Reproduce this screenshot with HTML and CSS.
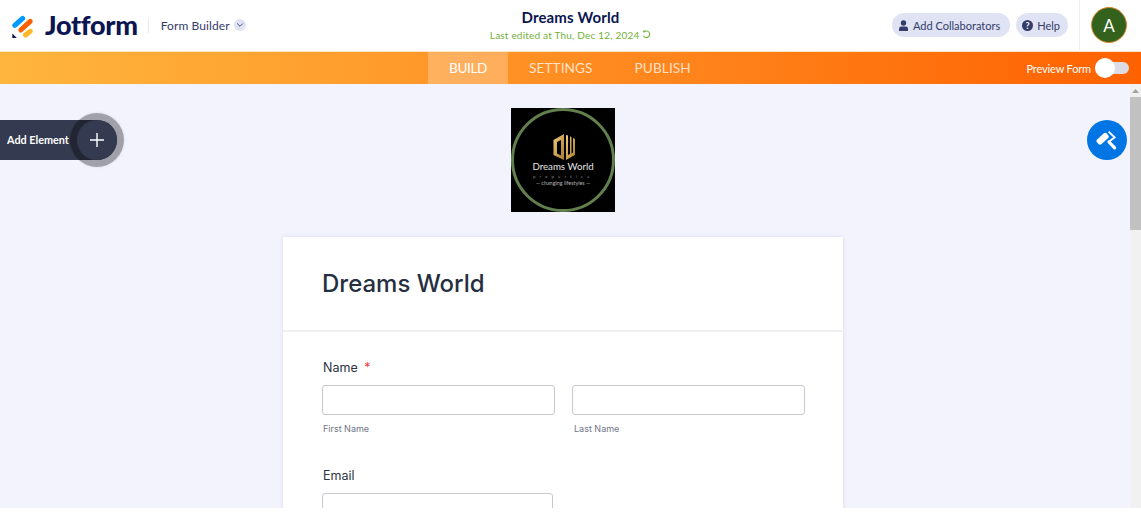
FILE: index.html
```html
<!DOCTYPE html>
<html lang="en">
<head>
<meta charset="UTF-8">
<meta name="viewport" content="width=device-width, initial-scale=1.0">
<title>Dreams World - Form Builder</title>
<link rel="stylesheet" href="styles.css">
</head>
<body>
<div class="app">
    <header class="topbar">
        <div class="brand">
            <svg class="brand-icon" width="24" height="26" viewBox="0 -2.5 24 26">
                <path d="M2.8 10.8 L10.6 3.8" stroke="#0099ff" stroke-width="5" stroke-linecap="round"/>
                <path d="M8.8 15.5 L18.2 6.8" stroke="#ff6100" stroke-width="5" stroke-linecap="round"/>
                <path d="M13.5 20.5 L18.2 16.8" stroke="#ffb629" stroke-width="5" stroke-linecap="round"/>
                <path d="M0.3 19 L5.3 24 H1.5 Q0.3 24 0.3 22.8 Z" fill="#0a1551"/>
            </svg>
            <span class="wordmark">Jotform</span>
            <span class="brand-sep"></span>
            <span class="builder-label">Form Builder</span>
            <span class="builder-caret">
                <svg width="8" height="6" viewBox="0 0 8 6"><path d="M1.2 1.5 L4 4.3 L6.8 1.5" fill="none" stroke="#343c6a" stroke-width="0.9"/></svg>
            </span>
        </div>
        <div class="form-title">
            <div class="form-name">Dreams World</div>
            <div class="form-edited">Last edited at Thu, Dec 12, 2024
                <svg width="9" height="9" viewBox="0 0 10 10"><path d="M2.4 2 A3.7 3.7 0 1 1 1.6 6.4" fill="none" stroke="#72b13a" stroke-width="1.2"/><path d="M0.8 0.6 L4 0.8 L2 3.4 Z" fill="#72b13a"/></svg>
            </div>
        </div>
        <div class="top-actions">
            <button class="pill">
                <svg width="11" height="11" viewBox="0 0 11 11"><circle cx="5.5" cy="3" r="2.7" fill="#343c6a"/><path d="M1 11 V8.8 Q1 6.6 3.4 6.6 H7.6 Q10 6.6 10 8.8 V11 Z" fill="#343c6a"/></svg>
                Add Collaborators
            </button>
            <button class="pill pill-help">
                <span class="help-icon">?</span>
                Help
            </button>
            <div class="avatar-wrap"><div class="avatar">A</div></div>
        </div>
    </header>

    <nav class="tabs">
        <div class="tab-list">
            <a class="tab active">BUILD</a>
            <a class="tab">SETTINGS</a>
            <a class="tab">PUBLISH</a>
        </div>
        <div class="preview">
            <span>Preview Form</span>
            <span class="toggle"><span class="knob"></span></span>
        </div>
    </nav>

    <div class="workspace">
        <main class="canvas">
            <svg class="form-logo" width="104" height="104" viewBox="0 0 104 104">
                <defs>
                    <linearGradient id="gold" x1="0" y1="0" x2="1" y2="1">
                        <stop offset="0" stop-color="#f1cd7a"/>
                        <stop offset="1" stop-color="#a97a2c"/>
                    </linearGradient>
                </defs>
                <rect width="104" height="104" fill="#000"/>
                <circle cx="52" cy="52" r="50.5" fill="none" stroke="#627f4e" stroke-width="3"/>
                <path fill-rule="evenodd" d="M42.5 32 L53 26 V52 L42.5 47 Z M46 34 V45.5 L50 47.5 V32 Z" fill="url(#gold)"/>
                <path d="M55 27 L57 27.5 V47 L59 46 V28.5 L60.5 29 V45.5 L62 44.5 V30 L64 31 V47 L55 52 Z" fill="url(#gold)"/>
                <text x="52" y="62" class="logo-name">Dreams World</text>
                <text x="52" y="69.5" class="logo-sub">properties</text>
                <text x="52" y="77" class="logo-tag">— changing lifestyles —</text>
            </svg>

            <form class="card">
                <h1 class="card-title">Dreams World</h1>
                <div class="card-body">
                    <div class="field">
                        <label class="field-label">Name <span class="req">*</span></label>
                        <div class="name-row">
                            <div class="name-col">
                                <input type="text" class="text-input">
                                <span class="sublabel">First Name</span>
                            </div>
                            <div class="name-col">
                                <input type="text" class="text-input">
                                <span class="sublabel">Last Name</span>
                            </div>
                        </div>
                    </div>
                    <div class="field">
                        <label class="field-label">Email</label>
                        <input type="text" class="text-input email-input">
                    </div>
                </div>
            </form>
        </main>
        <div class="scrollbar">
            <svg class="scroll-arrow" width="7" height="4" viewBox="0 0 7 4"><path d="M3.5 0 L7 4 H0 Z" fill="#a3a3a3"/></svg>
            <div class="scroll-thumb"></div>
        </div>

        <button class="add-element">
            Add Element
            <span class="add-circle">
                <svg width="14" height="14" viewBox="0 0 14 14"><path d="M7 0 V14 M0 7 H14" stroke="#fff" stroke-width="1.4"/></svg>
            </span>
        </button>
        <button class="paint-btn">
            <svg width="22" height="22" viewBox="-1 -1 22 22">
                <rect x="-6.6" y="-3.2" width="13.2" height="6.4" rx="2.4" fill="#fff" transform="translate(5.6 8.8) rotate(-42)"/>
                <path d="M11.6 1.6 L17.6 7.4 L11.8 11.8" fill="none" stroke="#fff" stroke-width="1.9"/>
                <path d="M12 12 L17.6 17.8" stroke="#fff" stroke-width="3.2" stroke-linecap="round"/>
            </svg>
        </button>
    </div>
</div>
</body>
</html>
```
FILE: styles.css
```css
* {
    box-sizing: border-box;
}
html, body {
    margin: 0;
    padding: 0;
    height: 526px;
    overflow: hidden;
    background-color: #fff;
    font-family: Inter, "Liberation Sans", sans-serif;
}
.app {
    height: 508px;
    display: flex;
    flex-direction: column;
    overflow: hidden;
}

/* top bar */
.topbar {
    height: 52px;
    flex: none;
    padding-bottom: 1px;
    display: grid;
    grid-template-columns: 1fr auto 1fr;
    align-items: center;
    background-color: #fff;
    border-bottom: 1px solid #ffe3c2;
}
.brand {
    display: flex;
    align-items: center;
    padding-left: 12px;
}
.brand-icon {
    margin-right: 9px;
}
.wordmark {
    font-family: Lato, sans-serif;
    font-weight: 900;
    font-size: 27px;
    line-height: 30px;
    color: #0a1551;
    letter-spacing: -0.3px;
}
.brand-sep {
    width: 1px;
    height: 15px;
    background-color: #e8e8ee;
    margin: 0 12px 0 10px;
}
.builder-label {
    font-family: Lato, sans-serif;
    font-size: 12px;
    color: #343c6a;
    letter-spacing: 0.1px;
}
.builder-caret {
    width: 12px;
    height: 12px;
    margin-left: 4px;
    border-radius: 50%;
    background-color: #dfe3f3;
    display: flex;
    align-items: center;
    justify-content: center;
}
.form-title {
    text-align: center;
    width: 240px;
}
.form-name {
    font-family: Lato, sans-serif;
    font-weight: 700;
    font-size: 15px;
    line-height: 18px;
    color: #0a1551;
    letter-spacing: 0.15px;
}
.form-edited {
    margin-top: 1px;
    font-family: Lato, sans-serif;
    font-size: 10px;
    line-height: 16px;
    color: #72b13a;
    letter-spacing: 0.2px;
}
.top-actions {
    display: flex;
    align-items: center;
    justify-content: flex-end;
    gap: 6px;
    height: 100%;
}
.pill {
    height: 24px;
    padding: 0 10px 0 6px;
    display: flex;
    align-items: center;
    gap: 4px;
    border: none;
    border-radius: 12px;
    background-color: #dfe3f3;
    color: #343c6a;
    font-family: Lato, sans-serif;
    font-size: 11px;
}
.pill-help {
    padding-right: 8px;
}
.help-icon {
    width: 11px;
    height: 11px;
    border-radius: 50%;
    background-color: #343c6a;
    color: #fff;
    font-size: 9px;
    font-weight: 700;
    line-height: 11px;
    text-align: center;
}
.avatar-wrap {
    width: 62px;
    height: 100%;
    margin-left: 5px;
    border-left: 1px solid #eeeef2;
    display: flex;
    align-items: center;
    padding-left: 11px;
}
.avatar {
    width: 36px;
    height: 36px;
    border-radius: 50%;
    background-color: #33621d;
    border: 1.5px solid #e0842a;
    color: #fff;
    font-family: Lato, sans-serif;
    font-size: 17px;
    display: flex;
    align-items: center;
    justify-content: center;
}

/* orange tabs */
.tabs {
    height: 32px;
    flex: none;
    display: flex;
    align-items: stretch;
    justify-content: space-between;
    padding-left: 428px;
    padding-right: 12px;
    background: linear-gradient(90deg, #ffb63e 0%, #ff9a2b 35%, #ff8018 65%, #ff6100 100%);
}
.tab-list {
    display: flex;
}
.tab {
    padding: 0 21px;
    font-family: Lato, sans-serif;
    font-size: 13.6px;
    letter-spacing: 0.1px;
    line-height: 32px;
    color: rgba(255, 255, 255, 0.75);
}
.tab.active {
    width: 80px;
    padding: 0;
    text-align: center;
    letter-spacing: -0.4px;
    background-color: rgba(255, 255, 255, 0.25);
    color: #fff;
}
.preview {
    display: flex;
    align-items: center;
    gap: 4px;
    color: #fff;
    font-family: Lato, sans-serif;
    font-size: 11px;
    letter-spacing: -0.15px;
}
.toggle {
    width: 34px;
    height: 12px;
    border-radius: 6px;
    background-color: #dcdde4;
    position: relative;
}
.knob {
    position: absolute;
    left: 0;
    top: -4px;
    width: 20px;
    height: 20px;
    border-radius: 50%;
    background-color: #fff;
}

/* canvas */
.workspace {
    flex: 1;
    min-height: 0;
    position: relative;
    display: flex;
    background-color: #f3f3fe;
}
.canvas {
    flex: 1;
    min-width: 0;
    overflow: hidden;
    padding: 24px 4px 0 0;
    display: flex;
    flex-direction: column;
    align-items: center;
}
.form-logo {
    flex: none;
    margin-bottom: 25px;
}
.logo-name {
    font-family: Lato, sans-serif;
    font-size: 9.7px;
    fill: #e6e6e6;
    text-anchor: middle;
}
.logo-sub {
    font-family: Lato, sans-serif;
    font-size: 4.5px;
    letter-spacing: 4px;
    fill: #8c8c8c;
    text-anchor: middle;
}
.logo-tag {
    font-family: Lato, sans-serif;
    font-size: 5.4px;
    fill: #b4b4b4;
    text-anchor: middle;
}
.card {
    flex: none;
    width: 560px;
    background-color: #fff;
    box-shadow: 0 0 4px rgba(87, 90, 130, 0.15);
}
.card-title {
    margin: 0;
    height: 95px;
    padding: 32px 39px 0;
    border-bottom: 2px solid #f0f0f4;
    font-size: 24px;
    line-height: 30px;
    font-weight: 500;
    color: #262f3f;
}
.card-body {
    padding: 28px 38px 0 39px;
}
.field {
    margin-bottom: 33px;
}
.field-label {
    display: block;
    margin: 0 0 9px 1px;
    font-size: 12.5px;
    line-height: 16px;
    color: #2c3345;
}
.req {
    color: #f23a3c;
    margin-left: 3px;
}
.name-row {
    display: flex;
    gap: 17px;
}
.name-col {
    width: 233px;
}
.text-input {
    display: block;
    width: 100%;
    height: 30px;
    padding: 0 8px;
    background-color: #fff;
    border: 1px solid #c8c8d2;
    border-radius: 3px;
}
.email-input {
    width: 231px;
}
.sublabel {
    display: block;
    margin: 8px 0 0 1px;
    font-size: 9px;
    line-height: 12px;
    color: #6f7689;
}
.name-col + .name-col .sublabel {
    margin-left: 2px;
}

/* page scrollbar */
.scrollbar {
    flex: none;
    width: 11px;
    background-color: #f1f1f1;
    padding-top: 5px;
    display: flex;
    flex-direction: column;
    align-items: center;
}
.scroll-arrow {
    flex: none;
    margin-bottom: 4px;
}
.scroll-thumb {
    width: 100%;
    height: 133px;
    background-color: #c1c1c1;
}

/* floating buttons */
.add-element {
    position: absolute;
    left: 0;
    top: 36px;
    width: 117px;
    height: 40px;
    padding: 0 0 0 7px;
    border: none;
    border-radius: 0 20px 20px 0;
    background-color: #343a4f;
    color: #fff;
    font-family: Lato, sans-serif;
    font-weight: 700;
    font-size: 10.8px;
    line-height: 40px;
    text-align: left;
}
.add-circle {
    position: absolute;
    right: 0;
    top: 0;
    width: 40px;
    height: 40px;
    border-radius: 50%;
    background-color: #343a4f;
    box-shadow: 0 0 0 7px rgba(0, 0, 0, 0.3), 0 0 2px 8px rgba(0, 0, 0, 0.05);
    display: flex;
    align-items: center;
    justify-content: center;
}
.paint-btn {
    position: absolute;
    left: 1087px;
    top: 36px;
    width: 40px;
    height: 40px;
    padding: 0;
    border: none;
    border-radius: 50%;
    background-color: #0075e3;
    display: flex;
    align-items: center;
    justify-content: center;
}
```
